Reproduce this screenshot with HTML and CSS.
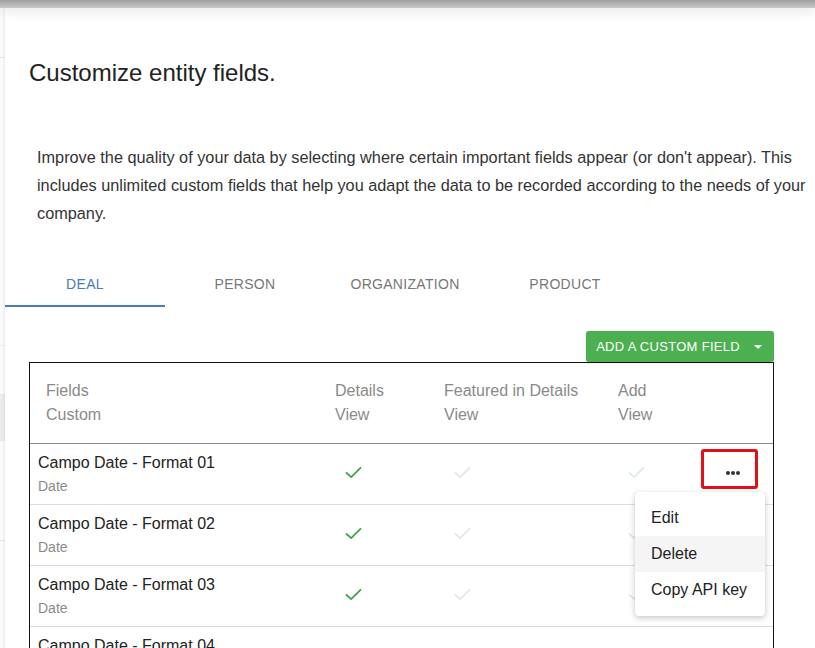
FILE: index.html
```html
<!DOCTYPE html>
<html>
<head>
<meta charset="utf-8">
<link rel="stylesheet" href="styles.css">
</head>
<body>
<div class="topbar"></div>
<div class="layout">
  <aside class="backdrop">
    <div class="bd-line bd-1"></div>
    <div class="bd-line bd-2"></div>
    <div class="bd-block"></div>
    <div class="bd-line bd-3"></div>
  </aside>
  <main class="panel">
    <h1 class="title">Customize entity fields.</h1>
    <p class="intro">Improve the quality of your data by selecting where certain important fields appear (or don't appear). This includes unlimited custom fields that help you adapt the data to be recorded according to the needs of your company.</p>
    <nav class="tabs">
      <div class="tab active">DEAL</div>
      <div class="tab">PERSON</div>
      <div class="tab">ORGANIZATION</div>
      <div class="tab">PRODUCT</div>
    </nav>
    <div class="content">
      <div class="toolbar">
        <button class="btn-add">ADD A CUSTOM FIELD <span class="caret"></span></button>
      </div>
      <div class="table">
        <div class="thead">
          <div class="th th-name">Fields<br>Custom</div>
          <div class="th">Details<br>View</div>
          <div class="th">Featured in Details<br>View</div>
          <div class="th">Add<br>View</div>
          <div class="th"></div>
        </div>
        <div class="row">
          <div class="cell-name"><div class="fname">Campo Date - Format 01</div><div class="ftype">Date</div></div>
          <div class="cell-check"><svg class="chk on" viewBox="0 0 18 14"><polyline points="1.5,7.5 6.5,12 16.5,2"/></svg></div>
          <div class="cell-check"><svg class="chk off" viewBox="0 0 18 14"><polyline points="1.5,7.5 6.5,12 16.5,2"/></svg></div>
          <div class="cell-check"><svg class="chk off" viewBox="0 0 18 14"><polyline points="1.5,7.5 6.5,12 16.5,2"/></svg></div>
          <div class="cell-actions">
            <button class="dots"><span></span><span></span><span></span></button>
            <ul class="menu">
              <li>Edit</li>
              <li class="hover">Delete</li>
              <li>Copy API key</li>
            </ul>
          </div>
        </div>
        <div class="row">
          <div class="cell-name"><div class="fname">Campo Date - Format 02</div><div class="ftype">Date</div></div>
          <div class="cell-check"><svg class="chk on" viewBox="0 0 18 14"><polyline points="1.5,7.5 6.5,12 16.5,2"/></svg></div>
          <div class="cell-check"><svg class="chk off" viewBox="0 0 18 14"><polyline points="1.5,7.5 6.5,12 16.5,2"/></svg></div>
          <div class="cell-check"><svg class="chk off" viewBox="0 0 18 14"><polyline points="1.5,7.5 6.5,12 16.5,2"/></svg></div>
          <div class="cell-actions"></div>
        </div>
        <div class="row">
          <div class="cell-name"><div class="fname">Campo Date - Format 03</div><div class="ftype">Date</div></div>
          <div class="cell-check"><svg class="chk on" viewBox="0 0 18 14"><polyline points="1.5,7.5 6.5,12 16.5,2"/></svg></div>
          <div class="cell-check"><svg class="chk off" viewBox="0 0 18 14"><polyline points="1.5,7.5 6.5,12 16.5,2"/></svg></div>
          <div class="cell-check"><svg class="chk off" viewBox="0 0 18 14"><polyline points="1.5,7.5 6.5,12 16.5,2"/></svg></div>
          <div class="cell-actions"></div>
        </div>
        <div class="row">
          <div class="cell-name"><div class="fname">Campo Date - Format 04</div><div class="ftype">Date</div></div>
          <div class="cell-check"><svg class="chk on" viewBox="0 0 18 14"><polyline points="1.5,7.5 6.5,12 16.5,2"/></svg></div>
          <div class="cell-check"><svg class="chk off" viewBox="0 0 18 14"><polyline points="1.5,7.5 6.5,12 16.5,2"/></svg></div>
          <div class="cell-check"><svg class="chk off" viewBox="0 0 18 14"><polyline points="1.5,7.5 6.5,12 16.5,2"/></svg></div>
          <div class="cell-actions"></div>
        </div>
      </div>
    </div>
  </main>
</div>
</body>
</html>
```

FILE: styles.css
```css
* { box-sizing: border-box; }
html, body {
  margin: 0;
  padding: 0;
  width: 815px;
  height: 648px;
  overflow: hidden;
  background: #fafafa;
  font-family: "Liberation Sans", Arial, Helvetica, sans-serif;
  color: #222;
}
.topbar {
  position: relative;
  z-index: 2;
  height: 8px;
  background: linear-gradient(#9e9e9e, #c9c9c9);
  box-shadow: 0 3px 12px rgba(0, 0, 0, 0.12);
}
.layout {
  display: flex;
  height: 640px;
}
.backdrop {
  width: 5px;
  flex: none;
  background: #fbfbfb;
  display: flex;
  flex-direction: column;
}
.bd-line { height: 1px; background: #e4e4e4; }
.bd-1 { margin-top: 49px; }
.bd-2 { margin-top: 287px; background: #eeeeee; }
.bd-block { margin-top: 48px; height: 47px; background: #ececec; }
.bd-3 { margin-top: 99px; }

.panel {
  position: relative;
  z-index: 1;
  flex: 1;
  background: #fff;
  box-shadow: -1px 0 3px rgba(0, 0, 0, 0.08);
  padding-top: 51px;
}
.title {
  margin: 0 0 0 24px;
  font-size: 24px;
  font-weight: normal;
  line-height: 28px;
  color: #222;
}
.intro {
  margin: 56px 0 0 32px;
  width: 779px;
  font-size: 16.3px;
  line-height: 28px;
  color: #333;
}
.tabs {
  display: flex;
  margin-top: 32px;
}
.tab {
  width: 160px;
  height: 48px;
  display: flex;
  align-items: center;
  justify-content: center;
  font-size: 14px;
  color: #777;
  letter-spacing: 0.3px;
  border-bottom: 2px solid transparent;
  padding-top: 4px;
}
.tab.active {
  color: #4a7db6;
  border-bottom-color: #4a7db6;
}
.content {
  margin-left: 24px;
  width: 745px;
}
.toolbar {
  display: flex;
  justify-content: flex-end;
  margin-top: 24px;
}
.btn-add {
  height: 31px;
  background: #4caf50;
  border: none;
  border-radius: 3px;
  color: #fff;
  font-family: "Liberation Sans", Arial, sans-serif;
  font-size: 13px;
  letter-spacing: 0.3px;
  padding: 0 12px 0 10px;
  display: flex;
  align-items: center;
  box-shadow: 0 1px 2px rgba(0, 0, 0, 0.15);
}
.caret {
  display: inline-block;
  margin-left: 14px;
  width: 0;
  height: 0;
  border-left: 4px solid transparent;
  border-right: 4px solid transparent;
  border-top: 4px solid #fff;
}
.table {
  border: 1px solid #111;
  border-bottom: none;
}
.thead, .row {
  display: grid;
  grid-template-columns: 305px 109px 174px 72px 1fr;
}
.thead {
  height: 81px;
  border-bottom: 1px solid #8a8a8a;
}
.th {
  padding-top: 16px;
  font-size: 16px;
  line-height: 24px;
  color: #8a8a8a;
}
.th-name { padding-left: 16px; }
.row {
  height: 61px;
  border-bottom: 1px solid #dddddd;
}
.cell-name { padding: 9px 0 0 8px; }
.fname {
  font-size: 16px;
  line-height: 20px;
  color: #222;
}
.ftype {
  margin-top: 5px;
  font-size: 14px;
  line-height: 16px;
  color: #8a8a8a;
}
.cell-check {
  padding: 21px 0 0 10px;
}
.chk {
  width: 17px;
  height: 13px;
  fill: none;
  stroke-width: 2;
  stroke-linecap: round;
  stroke-linejoin: round;
}
.chk.on { stroke: #45a34a; }
.chk.off { stroke: #dcece0; }
.cell-actions {
  position: relative;
  padding: 5px 0 0 11px;
}
.dots {
  width: 57px;
  height: 40px;
  border: 3px solid #e2101a;
  border-radius: 3px;
  background: #fff;
  display: flex;
  align-items: center;
  justify-content: center;
  gap: 1px;
  padding: 8px 0 0 6px;
}
.dots span {
  width: 4px;
  height: 4px;
  border-radius: 50%;
  background: #333;
}
.menu {
  position: absolute;
  top: 48px;
  right: 8px;
  z-index: 5;
  width: 130px;
  margin: 0;
  padding: 8px 0;
  list-style: none;
  background: #fff;
  border-radius: 4px;
  box-shadow: 0 2px 6px rgba(0, 0, 0, 0.22), 0 0 1px rgba(0, 0, 0, 0.1);
}
.menu li {
  height: 36px;
  line-height: 36px;
  padding-left: 16px;
  font-size: 16px;
  color: #222;
}
.menu li.hover { background: #f5f5f5; }
```
